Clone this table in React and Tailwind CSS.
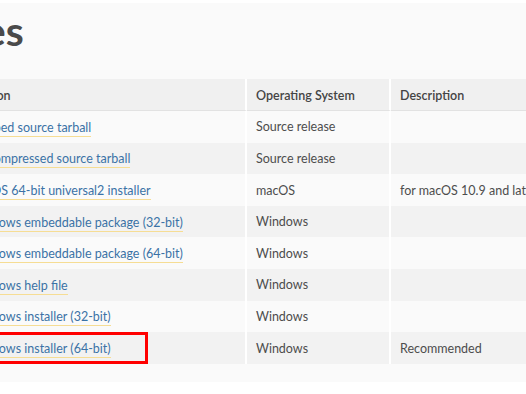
import React from 'react';

const rows = [
  { name: 'Gzipped source tarball', os: 'Source release', desc: '' },
  { name: 'XZ compressed source tarball', os: 'Source release', desc: '' },
  { name: 'macOS 64-bit universal2 installer', os: 'macOS', desc: 'for macOS 10.9 and later' },
  { name: 'Windows embeddable package (32-bit)', os: 'Windows', desc: '' },
  { name: 'Windows embeddable package (64-bit)', os: 'Windows', desc: '' },
  { name: 'Windows help file', os: 'Windows', desc: '' },
  { name: 'Windows installer (32-bit)', os: 'Windows', desc: '' },
  { name: 'Windows installer (64-bit)', os: 'Windows', desc: 'Recommended' },
];

const App = () => {
  return (
    <div className="w-[526px] h-[394px] overflow-hidden bg-white relative" style={{ fontFamily: 'Lato, "Noto Sans", sans-serif' }}>
      <div className="mt-[3px] h-[379px] bg-[#fafafa] overflow-hidden">
        <div className="ml-[-40px]">
          <h2 className="ml-[-20px] pt-[2px] h-[76px] text-[41px] leading-[52px] font-bold text-[#4a4a4a] whitespace-nowrap">Files</h2>
          <div className="grid grid-cols-[287px_144px_200px] text-[12.5px] text-[#4d4d4d]">
            <div className="h-[32px] flex items-center pt-[3px] pl-[9px] bg-[#f0f0f0] border-b border-[#e2e2e2] border-r-2 border-r-white font-semibold text-[#444]">Version</div>
            <div className="h-[32px] flex items-center pt-[3px] pl-[9px] bg-[#f0f0f0] border-b border-[#e2e2e2] border-r-2 border-r-white font-semibold text-[#444]">Operating System</div>
            <div className="h-[32px] flex items-center pt-[3px] pl-[9px] bg-[#f0f0f0] border-b border-[#e2e2e2] font-semibold text-[#444]">Description</div>
            {rows.map((r, i) => {
              const bg = i % 2 === 1 ? 'bg-[#f2f2f2]' : 'bg-[#fafafa]';
              return (
                <React.Fragment key={r.name}>
                  <div className={`h-[31.6px] flex items-center pt-[3px] pl-[9px] border-r-2 border-r-white whitespace-nowrap ${bg}`}>
                    <a href="#" className="text-[#3b72a6] border-b border-[#f6dd94] leading-[16px]">{r.name}</a>
                  </div>
                  <div className={`h-[31.6px] flex items-center pt-[2px] pl-[9px] border-r-2 border-r-white ${bg}`}>{r.os}</div>
                  <div className={`h-[31.6px] flex items-center pt-[2px] pl-[9px] whitespace-nowrap ${bg}`}>{r.desc}</div>
                </React.Fragment>
              );
            })}
          </div>
        </div>
      </div>
      <div className="absolute left-[-10px] top-[332px] w-[158px] h-[32px] border-[3px] border-[#ff0000]"></div>
    </div>
  );
};

export default App;
